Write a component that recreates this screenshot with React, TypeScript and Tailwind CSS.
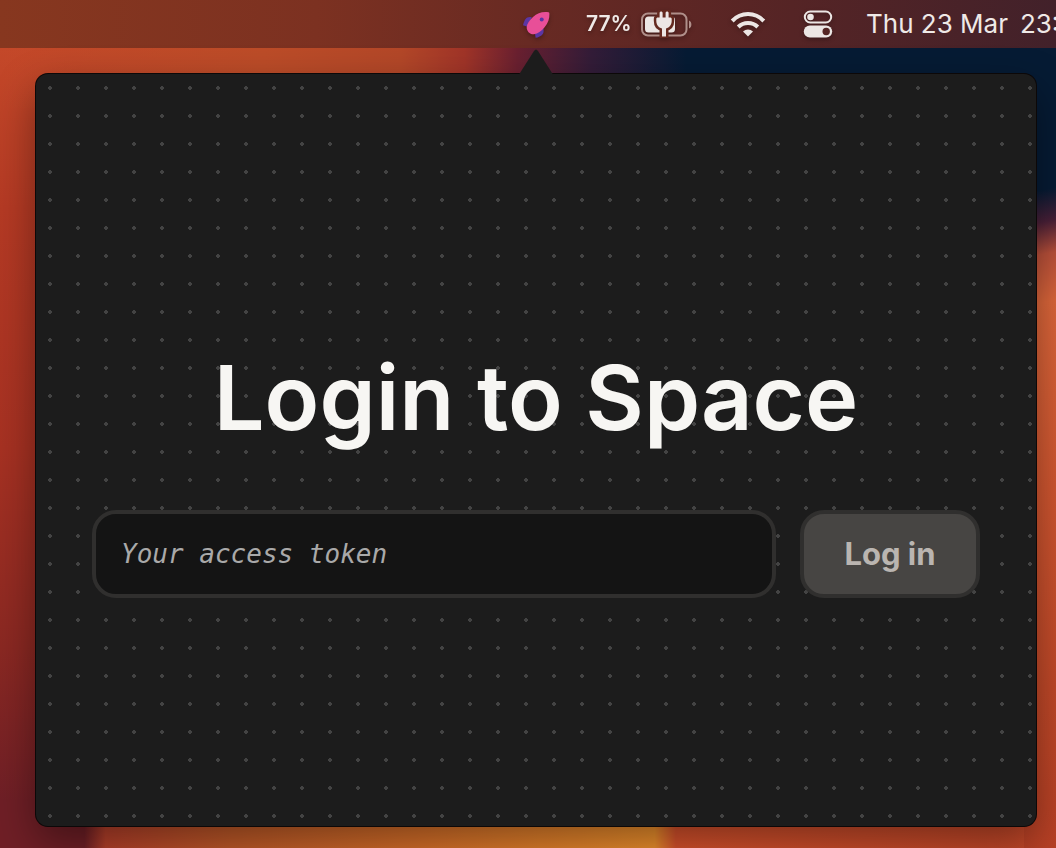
import { useState } from "react";

function RocketIcon() {
  return (
    <svg viewBox="0 0 32 32" className="size-8" aria-hidden="true">
      <path d="M10.800 9.200C8 8.600 5.600 9.300 4.400 11.300C3.400 13 2.400 15.200 2 17.200L6.500 18.800Z" fill="#5b36a4" />
      <path d="M14 25.500 14.600 29.800C17 29.600 20.400 28 21.800 26C22.800 24.400 22.900 22.200 22.200 19.500Z" fill="#5b36a4" />
      <path
        d="M27.600 4.300C28.200 4.500 28.400 5 28.400 5.700C28.600 10.600 27.200 14.800 23.600 19.200C20.200 23.300 16.800 25.700 13 26.200C8.800 26.500 5.500 23 5.700 18.900C6 15.600 8.500 12.200 12 9C16.500 5 21.500 3.400 27.600 4.300Z"
        fill="#e84f98"
      />
      <circle cx="20.700" cy="11.400" r="2" fill="#5b36a4" />
    </svg>
  );
}

function BatteryIcon() {
  return (
    <svg viewBox="0 0 52 28" className="h-7 w-[52px]" aria-hidden="true">
      <rect x="1" y="3.500" width="44.500" height="22" rx="6" fill="none" stroke="#b08f8a" strokeWidth="2" />
      <path d="M48 10.500c3.200 1.200 3.200 6.800 0 8z" fill="#b08f8a" />
      <rect x="4" y="6.500" width="30" height="16" rx="3.500" fill="#ece6e4" />
      <path
        d="M18.600 3c0-2 3-2 3 0V7.500h3V3c0-2 3-2 3 0V7.500h1.500c1 0 1.600.5 1.600 1.500v1.800c0 4.200-2.200 6.900-5.700 7.600V26.500h-4v-8.100c-3.500-.7-5.700-3.400-5.700-7.600V9c0-1 .6-1.500 1.600-1.500h1.700z"
        fill="#ece6e4"
        stroke="#64291f"
        strokeWidth="5"
        paintOrder="stroke"
      />
    </svg>
  );
}

function WifiIcon() {
  return (
    <svg viewBox="0 0 36 28" className="h-7 w-9" aria-hidden="true" fill="none" stroke="#ece6e4" strokeWidth="4">
      <path d="M2.200 11C11 1.800 25 1.800 33.800 11" />
      <path d="M8.200 17C13.600 11.700 22.400 11.700 27.800 17" />
      <path d="M18 26.500 13 21.500C15.800 18.700 20.200 18.700 23 21.500Z" fill="#ece6e4" stroke="none" />
    </svg>
  );
}

function ControlCentreIcon() {
  return (
    <svg viewBox="0 0 30 28" className="h-7 w-[30px]" aria-hidden="true">
      <rect x="1.800" y="1.500" width="26.400" height="11" rx="5.500" fill="none" stroke="#ece6e4" strokeWidth="2" />
      <circle cx="7.500" cy="7" r="3.300" fill="#ece6e4" />
      <rect x="0.800" y="15.500" width="28.400" height="12" rx="6" fill="#ece6e4" />
      <circle cx="23.200" cy="21.500" r="3.700" fill="#542423" />
    </svg>
  );
}

function MenuBar() {
  return (
    <header className="flex h-12 items-center justify-end overflow-hidden bg-[linear-gradient(90deg,#87371f_0%,#7c3121_30%,#682a23_50%,#552425_75%,#42212a_100%)] text-[#efe9e7]">
      <div className="flex shrink-0 items-center drop-shadow-[0_2px_2px_rgba(0,0,0,0.3)]">
        <button type="button" aria-label="Space" className="mr-[33px]">
          <RocketIcon />
        </button>
        <div className="mr-[37px] flex items-center gap-2">
          <span className="w-[47px] text-[21px] leading-7 font-semibold">77%</span>
          <BatteryIcon />
        </div>
        <button type="button" aria-label="Wi-Fi" className="mr-[37px]">
          <WifiIcon />
        </button>
        <button type="button" aria-label="Control Centre" className="mr-[33px]">
          <ControlCentreIcon />
        </button>
      </div>
      <time className="flex w-[190px] shrink-0 gap-3 text-[26px] leading-8 whitespace-nowrap">
        <span>Thu 23 Mar</span>
        <span>23:</span>
      </time>
    </header>
  );
}

function LoginPanel() {
  const [token, setToken] = useState("");
  return (
    <section className="relative flex flex-1 flex-col items-center justify-center rounded-xl bg-[#1c1c1c] bg-[radial-gradient(circle,#434343_2px,transparent_2px)] bg-size-[28px_28px] px-14 pt-10 shadow-[0_0_0_1px_#0c0808,0_16px_40px_rgba(0,0,0,0.4)]">
      <svg
        viewBox="0 0 34 26"
        className="absolute -top-[25px] left-1/2 h-[26px] w-[34px] -translate-x-1/2"
        aria-hidden="true"
      >
        <path d="M0 25.500 15 2Q17 -1 19 2L34 25.500Z" fill="#1c1c1c" />
      </svg>
      <h1 className="text-center text-[90px] leading-[112px] font-semibold whitespace-nowrap text-[#f7f6f3]">
        Login to Space
      </h1>
      <form className="mt-14 flex w-full gap-6" onSubmit={(event) => event.preventDefault()}>
        <input
          type="text"
          aria-label="Your access token"
          placeholder="Your access token"
          value={token}
          onChange={(event) => setToken(event.target.value)}
          className="h-[88px] min-w-0 flex-1 rounded-3xl border-4 border-[#302f2e] bg-[#141414] px-[25px] font-['DejaVu_Sans_Mono',monospace] text-[26px] text-[#f7f6f3] outline-none placeholder:text-[#a9a9a9] placeholder:italic"
        />
        <button
          type="submit"
          disabled={token === ""}
          className="h-[88px] w-[180px] rounded-3xl border-4 border-[#302f2e] bg-[#474543] text-[31px] font-bold text-[#bab5b1]"
        >
          Log in
        </button>
      </form>
    </section>
  );
}

const wallpaper = [
  "bg-no-repeat",
  "bg-[linear-gradient(170deg,#061b34_0%,#061b34_18%,#4a2038_22%,#b9503a_26%,#dc663a_32%,#d05630_55%,#c04828_80%,#b84025_100%),linear-gradient(90deg,transparent_0%,#bc4c28_25%,#b34728_38%,#a03428_44%,#6a2030_49%,#331c38_56%,#061b34_65%),linear-gradient(90deg,#6f1f26_0%,#6f1f26_8%,#b5402a_10%,#c05a28_22%,#d87029_40%,#ee902c_62%,#d8522c_64%,#c04628_100%),linear-gradient(180deg,#c44829_0%,#b53a24_20%,#a63122_50%,#8a2822_75%,#6f1f26_94%)]",
  "bg-size-[32px_100%,100%_60px,100%_40px,100%_100%]",
  "bg-position-[right_top,left_top,left_bottom,left_top]",
].join(" ");

export default function App() {
  return (
    <div className="flex min-h-screen flex-col overflow-hidden bg-[#c04a28] font-['Inter','Liberation_Sans',sans-serif]">
      <MenuBar />
      <main className={`flex flex-1 flex-col pt-[26px] pr-5 pb-[22px] pl-9 ${wallpaper}`}>
        <LoginPanel />
      </main>
    </div>
  );
}
